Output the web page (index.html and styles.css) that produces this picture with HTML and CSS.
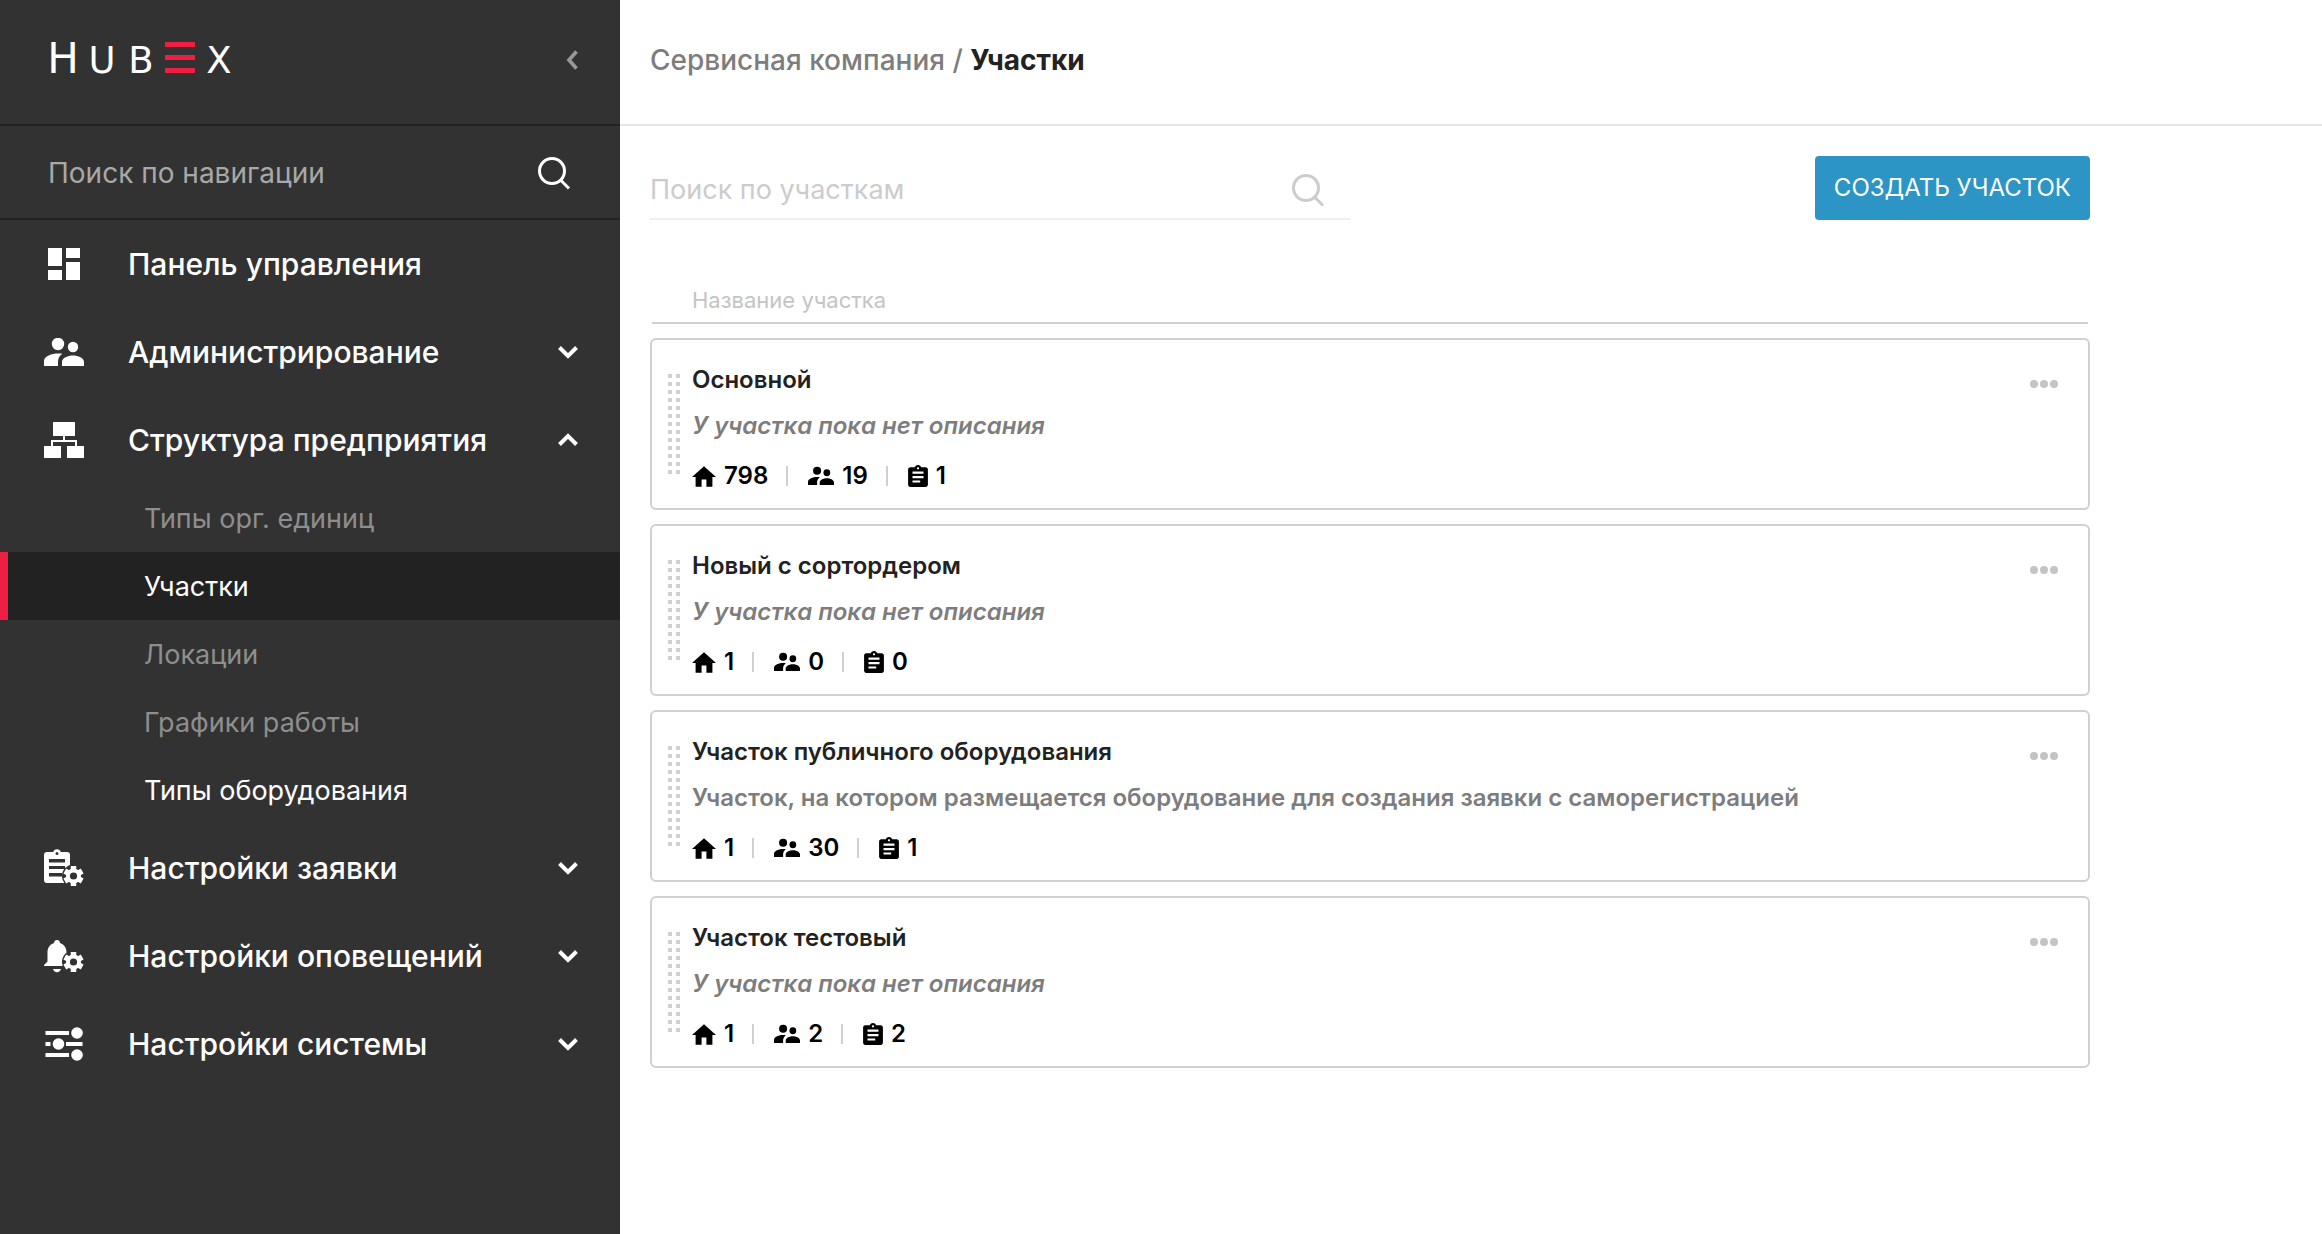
FILE: index.html
```html
<!DOCTYPE html>
<html lang="ru">
<head>
<meta charset="utf-8">
<meta name="viewport" content="width=device-width, initial-scale=1">
<title>Участки — HubEx</title>
<link rel="stylesheet" href="styles.css">
</head>
<body>
<svg class="sprite" aria-hidden="true">
  <symbol id="i-search" viewBox="0 0 34 34"><g fill="none" stroke="currentColor" stroke-width="3"><circle cx="15" cy="15" r="12.5"/><path d="M23.5 24 32 32.500"/></g></symbol>
  <symbol id="i-down" viewBox="0 0 20 14"><path d="M1.500 2.500 10 11l8.500-8.500" fill="none" stroke="currentColor" stroke-width="4"/></symbol>
  <symbol id="i-up" viewBox="0 0 20 14"><path d="M1.500 11.500 10 3l8.500 8.500" fill="none" stroke="currentColor" stroke-width="4"/></symbol>
  <symbol id="i-left" viewBox="0 0 12 20"><path d="M10.500 1.500 3 10l7.500 8.500" fill="none" stroke="currentColor" stroke-width="3.600"/></symbol>
  <symbol id="i-dashboard" viewBox="0 0 40 40"><path d="M4 4h14v18H4zM4 26h14v10H4zM22 4h14v10H22zM22 18h14v18H22z"/></symbol>
  <symbol id="i-people" viewBox="0 6 40 28"><circle cx="14" cy="12" r="6.200"/><circle cx="29" cy="15" r="5.200"/><path d="M18 34v-4c0-4 6-6.400 11-6.400S40 26 40 30v4zM0 34v-5c0-5 8-7.600 14-7.600 1.500 0 3 .1 4.300.4C15 24 14 27 14 30v4z"/></symbol>
  <symbol id="i-structure" viewBox="0 0 40 40"><path d="M9 2h22v14H9zM0 26h17v12H0zM23 26h17v12H23z"/><path d="M20 16v5M8 27v-6h24v6" fill="none" stroke="currentColor" stroke-width="2"/></symbol>
  <symbol id="i-gear" viewBox="-12 -12 24 24"><circle class="cut" r="11.500"/><path d="M0-10V10M-8.700-5 8.700 5M-8.700 5 8.700-5" stroke="currentColor" stroke-width="5.500"/><circle r="7.500"/><circle class="cut" r="3.600"/></symbol>
  <symbol id="i-request" viewBox="0 0 40 40"><path d="M3 4h6.200a4 4 0 0 1 7.600 0H23a3 3 0 0 1 3 3v25a3 3 0 0 1-3 3H3a3 3 0 0 1-3-3V7a3 3 0 0 1 3-3z"/><path class="cut" d="M11.500 5.500a1.500 1.500 0 1 1 3 0 1.500 1.500 0 0 1-3 0zM5 11h16v3.500H5zM5 18h16v3H5zM5 25h13v3.500H5z"/><use href="#i-gear" x="17.500" y="16" width="24" height="24"/></symbol>
  <symbol id="i-alert" viewBox="0 0 40 40"><path d="M13 4c1.700 0 3 1.200 3 3 4.500 1.500 6.500 5 6.500 9.500v9.500L26 30H0v-1l3.500-3.500v-9C3.500 12 5.500 8.500 10 7c0-1.800 1.300-3 3-3zM9 33h8c-.5 2-2 3.200-4 3.200S9.500 35 9 33z"/><use href="#i-gear" x="17.500" y="14" width="24" height="24"/></symbol>
  <symbol id="i-system" viewBox="0 0 40 40"><path d="M1.500 7H25v4H1.500zM1.500 18h5v4h-5zM22 18h16.500v4H22zM1.500 29H25v4H1.500z"/><circle cx="33" cy="9" r="5.800"/><circle cx="14.500" cy="20" r="5.800"/><circle cx="33" cy="31" r="5.800"/></symbol>
  <symbol id="i-home" viewBox="2 3 20 17"><path d="M10 20v-6h4v6h5v-8h3L12 3 2 12h3v8z"/></symbol>
  <symbol id="i-clipboard" viewBox="3 1 18 20"><path d="M19 3h-4.180C14.400 1.840 13.300 1 12 1c-1.300 0-2.400.84-2.820 2H5c-1.100 0-2 .9-2 2v14c0 1.100.9 2 2 2h14c1.100 0 2-.9 2-2V5c0-1.100-.9-2-2-2zm-7 0c.55 0 1 .45 1 1s-.45 1-1 1-1-.45-1-1 .45-1 1-1zm2 14H7v-2h7v2zm3-4H7v-2h10v2zm0-4H7V7h10v2z"/></symbol>
  <symbol id="i-more" viewBox="0 0 28 8"><circle cx="4" cy="4" r="4"/><circle cx="14" cy="4" r="4"/><circle cx="24" cy="4" r="4"/></symbol>
</svg>

<div class="layout">
  <aside class="sidebar">
    <div class="sidebar-head">
      <a class="logo" href="#" aria-label="HubEx">
        <span class="logo-cap">H</span><span>U</span><span>B</span>
        <svg class="logo-bars" viewBox="0 0 30 31"><path d="M0 0h30v5H0zM0 13h30v5H0zM0 26h30v5H0z"/></svg>
        <span>X</span>
      </a>
      <button class="collapse" type="button" aria-label="Свернуть меню"><svg width="12" height="20"><use href="#i-left"/></svg></button>
    </div>
    <form class="nav-search" role="search">
      <input type="search" placeholder="Поиск по навигации" aria-label="Поиск по навигации">
      <button type="submit" aria-label="Найти"><svg width="34" height="34"><use href="#i-search"/></svg></button>
    </form>
    <nav>
      <ul class="menu">
        <li><a class="menu-item" href="#"><svg class="menu-icon"><use href="#i-dashboard"/></svg><span>Панель управления</span></a></li>
        <li><button class="menu-item" type="button" aria-expanded="false"><svg class="menu-icon menu-icon-wide"><use href="#i-people"/></svg><span>Администрирование</span><svg class="arrow"><use href="#i-down"/></svg></button></li>
        <li><button class="menu-item" type="button" aria-expanded="true"><svg class="menu-icon"><use href="#i-structure"/></svg><span>Структура предприятия</span><svg class="arrow"><use href="#i-up"/></svg></button>
          <ul class="submenu">
            <li><a class="dim" href="#">Типы орг. единиц</a></li>
            <li><a class="active" href="#" aria-current="page">Участки</a></li>
            <li><a class="dim" href="#">Локации</a></li>
            <li><a class="dim" href="#">Графики работы</a></li>
            <li><a href="#">Типы оборудования</a></li>
          </ul>
        </li>
        <li><button class="menu-item" type="button" aria-expanded="false"><svg class="menu-icon"><use href="#i-request"/></svg><span>Настройки заявки</span><svg class="arrow"><use href="#i-down"/></svg></button></li>
        <li><button class="menu-item" type="button" aria-expanded="false"><svg class="menu-icon"><use href="#i-alert"/></svg><span>Настройки оповещений</span><svg class="arrow"><use href="#i-down"/></svg></button></li>
        <li><button class="menu-item" type="button" aria-expanded="false"><svg class="menu-icon"><use href="#i-system"/></svg><span>Настройки системы</span><svg class="arrow"><use href="#i-down"/></svg></button></li>
      </ul>
    </nav>
  </aside>

  <main class="main">
    <header class="page-head">
      <h1 class="crumbs"><a href="#">Сервисная компания</a> <span>/</span> <strong>Участки</strong></h1>
    </header>
    <div class="content">
      <div class="toolbar">
        <form class="search" role="search">
          <input type="search" placeholder="Поиск по участкам" aria-label="Поиск по участкам">
          <button type="submit" aria-label="Найти"><svg width="34" height="34"><use href="#i-search"/></svg></button>
        </form>
        <button class="create" type="button">СОЗДАТЬ УЧАСТОК</button>
      </div>
      <div class="list-head">Название участка</div>
      <ul class="cards">
        <li class="card">
          <span class="handle"></span>
          <div class="card-body">
            <h2>Основной</h2>
            <p class="empty">У участка пока нет описания</p>
            <ul class="stats">
              <li><svg class="home"><use href="#i-home"/></svg>798</li>
              <li><svg class="people"><use href="#i-people"/></svg>19</li>
              <li><svg class="clip"><use href="#i-clipboard"/></svg>1</li>
            </ul>
          </div>
          <button class="more" type="button" aria-label="Действия"><svg width="28" height="8"><use href="#i-more"/></svg></button>
        </li>
        <li class="card">
          <span class="handle"></span>
          <div class="card-body">
            <h2>Новый с сортордером</h2>
            <p class="empty">У участка пока нет описания</p>
            <ul class="stats">
              <li><svg class="home"><use href="#i-home"/></svg>1</li>
              <li><svg class="people"><use href="#i-people"/></svg>0</li>
              <li><svg class="clip"><use href="#i-clipboard"/></svg>0</li>
            </ul>
          </div>
          <button class="more" type="button" aria-label="Действия"><svg width="28" height="8"><use href="#i-more"/></svg></button>
        </li>
        <li class="card">
          <span class="handle"></span>
          <div class="card-body">
            <h2>Участок публичного оборудования</h2>
            <p>Участок, на котором размещается оборудование для создания заявки с саморегистрацией</p>
            <ul class="stats">
              <li><svg class="home"><use href="#i-home"/></svg>1</li>
              <li><svg class="people"><use href="#i-people"/></svg>30</li>
              <li><svg class="clip"><use href="#i-clipboard"/></svg>1</li>
            </ul>
          </div>
          <button class="more" type="button" aria-label="Действия"><svg width="28" height="8"><use href="#i-more"/></svg></button>
        </li>
        <li class="card">
          <span class="handle"></span>
          <div class="card-body">
            <h2>Участок тестовый</h2>
            <p class="empty">У участка пока нет описания</p>
            <ul class="stats">
              <li><svg class="home"><use href="#i-home"/></svg>1</li>
              <li><svg class="people"><use href="#i-people"/></svg>2</li>
              <li><svg class="clip"><use href="#i-clipboard"/></svg>2</li>
            </ul>
          </div>
          <button class="more" type="button" aria-label="Действия"><svg width="28" height="8"><use href="#i-more"/></svg></button>
        </li>
      </ul>
    </div>
  </main>
</div>
</body>
</html>
```

FILE: styles.css
```css
* { box-sizing: border-box; }

body {
  margin: 0;
  background: #fff;
  color: #222;
  font: 24px/32px "Inter", "Liberation Sans", sans-serif;
}

ul { margin: 0; padding: 0; list-style: none; }
h1, h2, p { margin: 0; }
a { color: inherit; text-decoration: none; }
svg { display: block; flex: none; fill: currentColor; }

button, input {
  margin: 0;
  padding: 0;
  border: 0;
  background: none;
  color: inherit;
  font: inherit;
}
button { cursor: pointer; }
input { flex: 1; min-width: 0; outline: 0; appearance: none; }
input::placeholder { color: inherit; opacity: 1; }

.sprite { position: absolute; width: 0; height: 0; }
.cut { fill: #323232; }

.layout {
  display: grid;
  grid-template-columns: 620px minmax(0, 1fr);
  min-height: 100vh;
}

/* Sidebar */
.sidebar { background: #323232; color: #fff; }

.sidebar-head {
  display: flex;
  align-items: center;
  justify-content: space-between;
  height: 126px;
  padding: 0 42px 4px 48px;
  border-bottom: 2px solid #222;
}

.logo {
  display: grid;
  grid-template-columns: 30px 30px 30px 30px 30px;
  column-gap: 9px;
  align-items: baseline;
  justify-items: center;
  font-family: "DejaVu Sans", sans-serif;
  font-size: 37px;
  line-height: 44px;
}
.logo-cap { font-size: 42px; }
.logo-bars { width: 30px; height: 31px; color: #ef1f44; }
.collapse { color: #999; }

.nav-search {
  display: flex;
  align-items: center;
  height: 94px;
  padding: 2px 49px 0 48px;
  border-bottom: 2px solid #222;
  font-size: 28px;
}
.nav-search input { color: #a8a8a8; }

.menu-item {
  display: flex;
  align-items: center;
  width: 100%;
  height: 88px;
  padding: 0 42px 0 44px;
  gap: 44px;
  font-size: 30px;
  font-weight: 500;
  text-align: left;
}
.menu-icon { width: 40px; height: 40px; }
.menu-icon-wide { height: 28px; }
.arrow { width: 20px; height: 14px; margin-left: auto; }

.submenu a {
  display: block;
  padding: 2px 0 0 136px;
  border-left: 8px solid transparent;
  font-size: 27px;
  line-height: 66px;
}
.submenu .dim { color: #8e8e8e; }
.submenu .active { background: #222; border-color: #ef1f44; }

/* Page */
.page-head {
  display: flex;
  align-items: center;
  height: 126px;
  padding: 0 30px 4px;
  border-bottom: 2px solid #e5e5e5;
}
.crumbs { color: #7d7d7d; font-size: 28px; font-weight: 500; }
.crumbs strong { color: #222; font-weight: 700; }

.content { max-width: 1500px; padding: 30px; }

.toolbar {
  display: flex;
  align-items: flex-end;
  justify-content: space-between;
  margin-bottom: 64px;
}
.search {
  display: flex;
  align-items: center;
  flex: 0 1 700px;
  height: 60px;
  padding: 2px 25px 0 0;
  border-bottom: 2px solid #eee;
  color: #ccc;
  font-size: 27px;
}
.create {
  height: 64px;
  padding: 0 19px;
  border-radius: 4px;
  background: #2d95c5;
  color: #fff;
}

.list-head {
  margin: 0 2px 14px;
  padding: 0 40px 6px;
  border-bottom: 2px solid #d0d0d0;
  color: #c4c4c4;
  font-size: 22px;
}

.cards { display: grid; gap: 14px; }

.card {
  display: flex;
  align-items: flex-start;
  gap: 12px;
  padding: 24px 30px 16px 16px;
  border: 2px solid #d0d0d0;
  border-radius: 6px;
}
.handle {
  width: 12px;
  height: 100px;
  margin-top: 10px;
  background: conic-gradient(at 4px 4px, transparent 75%, #d0d0d0 0) 0 0 / 8px 8px;
}
.card-body { flex: 1; min-width: 0; }
.card h2 { font-size: 24px; font-weight: 600; }
.card p { margin: 14px 0 18px; color: #7d7d7d; font-weight: 600; }
.card .empty { font-style: italic; }
.more { padding: 16px 0 8px; color: #c4c4c4; }

.stats { display: flex; color: #000; font-weight: 600; }
.stats li { display: flex; align-items: center; gap: 8px; }
.stats li + li::before {
  content: "";
  width: 2px;
  height: 20px;
  margin: 0 12px 0 18px;
  background: #d0d0d0;
}
.home { width: 24px; height: 21px; }
.people { width: 26px; height: 20px; }
.clip { width: 20px; height: 22px; }
```
